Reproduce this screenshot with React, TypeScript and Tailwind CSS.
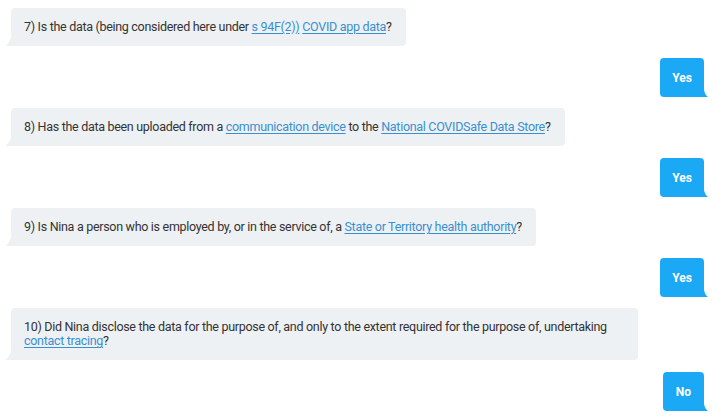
import React from "react";

type Part = string | { link: string };

const questions: Part[][] = [
  ["7) Is the data (being considered here under ", { link: "s 94F(2))" }, " ", { link: "COVID app data" }, "?"],
  ["8) Has the data been uploaded from a ", { link: "communication device" }, " to the ", { link: "National COVIDSafe Data Store" }, "?"],
  ["9) Is Nina a person who is employed by, or in the service of, a ", { link: "State or Territory health authority" }, "?"],
  [
    "10) Did Nina disclose the data for the purpose of, and only to the extent required for the purpose of, undertaking ",
    { link: "contact tracing" },
    "?",
  ],
];

const answers = ["Yes", "Yes", "Yes", "No"];

function Question({ parts }: { parts: Part[] }) {
  return (
    <div className="flex justify-start mb-3">
      <div className="relative ml-[11px] max-w-[627px] bg-[#eef1f4] rounded-[4px] rounded-bl-none pl-[13px] pr-[14px] py-[12px] text-[12.5px] leading-[14px] tracking-[-0.3px] text-[#333333]">
        <svg className="absolute -left-[6px] bottom-0" width="6" height="9" viewBox="0 0 6 9">
          <path d="M6 0 L6 9 L0 9 Q4 7 6 0 Z" fill="#eef1f4" />
        </svg>
        {parts.map((p, i) =>
          typeof p === "string" ? (
            <span key={i}>{p}</span>
          ) : (
            <a key={i} href="#" className="text-[#3a8fd0] underline underline-offset-2">
              {p.link}
            </a>
          )
        )}
      </div>
    </div>
  );
}

function Answer({ label }: { label: string }) {
  return (
    <div className="flex justify-end mb-[11px]">
      <div
        className={
          label === "No"
            ? "relative mr-[8px] h-[39px] flex items-center bg-[#1ba8f5] rounded-[4px] rounded-br-none px-[13px] text-[12px] font-bold text-white"
            : "relative mr-[8px] h-[39px] flex items-center bg-[#1ba8f5] rounded-[4px] rounded-br-none px-[12px] text-[12px] font-bold text-white"
        }
      >
        {label}
        <svg className="absolute -right-[4px] bottom-0" width="4" height="7" viewBox="0 0 4 7">
          <path d="M0 0 L0 7 L4 7 Q1 5 0 0 Z" fill="#1ba8f5" />
        </svg>
      </div>
    </div>
  );
}

export default function App() {
  return (
    <div className="w-[712px] h-[419px] bg-white pt-2 overflow-hidden" style={{ fontFamily: "Roboto, 'Noto Sans', sans-serif" }}>
      {questions.map((q, i) => (
        <React.Fragment key={i}>
          <Question parts={q} />
          <Answer label={answers[i]} />
        </React.Fragment>
      ))}
    </div>
  );
}
